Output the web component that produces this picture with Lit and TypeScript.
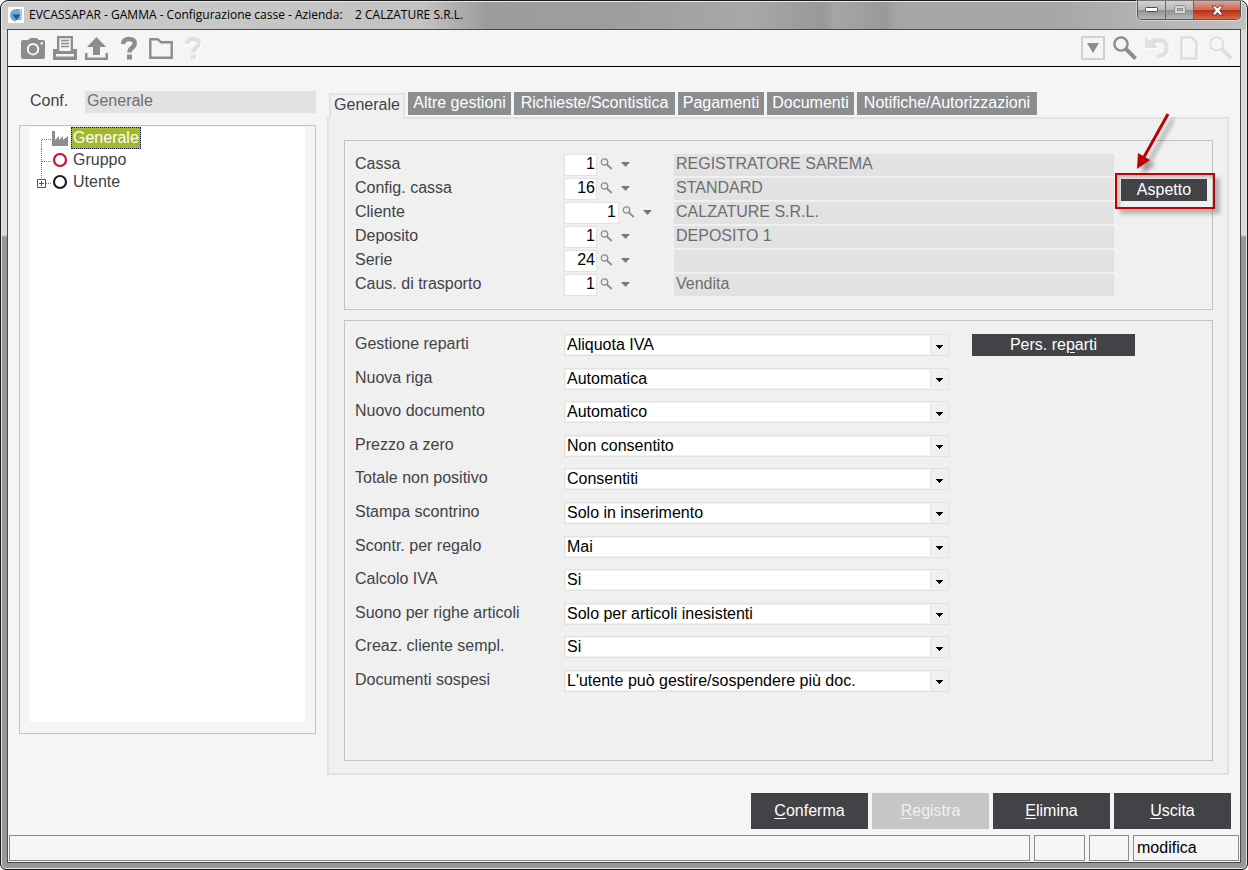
import { LitElement, html, css, svg } from "lit";
import { customElement, property, state } from "lit/decorators.js";
import { classMap } from "lit/directives/class-map.js";

type Lookup = { id: string; label: string; value: string; text: string; wide?: boolean };
type Choice = { id: string; label: string; value: string };

const TABS = ["Generale", "Altre gestioni", "Richieste/Scontistica", "Pagamenti", "Documenti", "Notifiche/Autorizzazioni"];

const LOOKUPS: Lookup[] = [
  { id: "cassa", label: "Cassa", value: "1", text: "REGISTRATORE SAREMA" },
  { id: "config", label: "Config. cassa", value: "16", text: "STANDARD" },
  { id: "cliente", label: "Cliente", value: "1", text: "CALZATURE S.R.L.", wide: true },
  { id: "deposito", label: "Deposito", value: "1", text: "DEPOSITO 1" },
  { id: "serie", label: "Serie", value: "24", text: "" },
  { id: "causale", label: "Caus. di trasporto", value: "1", text: "Vendita" },
];

const CHOICES: Choice[] = [
  { id: "reparti", label: "Gestione reparti", value: "Aliquota IVA" },
  { id: "riga", label: "Nuova riga", value: "Automatica" },
  { id: "documento", label: "Nuovo documento", value: "Automatico" },
  { id: "prezzo", label: "Prezzo a zero", value: "Non consentito" },
  { id: "totale", label: "Totale non positivo", value: "Consentiti" },
  { id: "stampa", label: "Stampa scontrino", value: "Solo in inserimento" },
  { id: "regalo", label: "Scontr. per regalo", value: "Mai" },
  { id: "iva", label: "Calcolo IVA", value: "Si" },
  { id: "suono", label: "Suono per righe articoli", value: "Solo per articoli inesistenti" },
  { id: "sempl", label: "Creaz. cliente sempl.", value: "Si" },
  { id: "sospesi", label: "Documenti sospesi", value: "L'utente può gestire/sospendere più doc." },
];

const QUESTION = svg`<path d="M6 8C6.400 4.500 8.600 3 12 3c3.600 0 5.700 1.700 5.700 4.500 0 2.300-1.300 3.400-3 4.600-1.700 1.200-2.200 2.200-2.200 4.400" fill="none" stroke="currentColor" stroke-width="4.400"/><rect x="10" y="18.500" width="5" height="5" fill="currentColor"/>`;
const LENS = svg`<circle cx="8" cy="8" r="6.600" fill="none" stroke="currentColor" stroke-width="2.400"/><path d="M13 13l9.600 9.600" stroke="currentColor" stroke-width="4" fill="none"/>`;

const ICONS = {
  camera: svg`<path fill="currentColor" fill-rule="evenodd" d="M2 4h5l2.500-2h6L18 4h4a2 2 0 0 1 2 2v15a2 2 0 0 1-2 2H2a2 2 0 0 1-2-2V6a2 2 0 0 1 2-2zM12 7a6.200 6.200 0 1 0 0 12.400A6.200 6.200 0 0 0 12 7zm7.500-.8v2.300H22V6.200z"/><circle cx="12" cy="13.200" r="4.200" fill="currentColor"/>`,
  printer: svg`<path fill="currentColor" fill-rule="evenodd" d="M4 0h16v13h4v11H0V13h4zM6.300 2.300V15h11.400V2.300zM3 18v2.500h18V18z"/><path d="M8 4.500h8M8 7.500h8M8 10.500h8" stroke="currentColor" stroke-width="1.300"/>`,
  upload: svg`<path fill="currentColor" d="M11.500 1L21 11h-6v8H8v-8H2zM0 17h2.500v4.500h18V17H23v7H0z"/>`,
  help: QUESTION,
  folder: svg`<path d="M1.300 21.700V3.300h7.500l3.200 3h10.700v15.400z" fill="none" stroke="currentColor" stroke-width="2.400"/>`,
  drop: svg`<rect x="1" y="1" width="22" height="22" fill="none" stroke="#d0d0d0" stroke-width="2"/><path fill="currentColor" d="M6 7h12l-6 10z"/>`,
  lens: LENS,
  undo: svg`<path fill="currentColor" d="M0 1l4 3.500C11-.5 24 1.500 24 11.500 24 19 19 22.500 12 22.500V18c5 0 7.500-2.500 7.500-6.500 0-5-6-6.300-9.500-3.700L13 12H0z"/>`,
  page: svg`<path d="M4.500 1.500h10l5 5v16h-15z" fill="none" stroke="currentColor" stroke-width="3"/>`,
};
type IconName = keyof typeof ICONS;

@customElement("tool-button")
class ToolButton extends LitElement {
  @property() name: IconName = "help";
  @property() label = "";
  @property({ type: Boolean }) off = false;

  static styles = css`
    :host { display: block; }
    .tool { display: block; width: 24px; height: 24px; padding: 0; border: 0; background: none; color: #8c8d8f; }
    .off { color: #e0e0e0; filter: drop-shadow(1px 1px 0 #ffffff); }
    .glyph { display: block; }
  `;

  render() {
    return html`<button class=${classMap({ tool: true, off: this.off })} aria-label=${this.label} ?disabled=${this.off}>
      <svg class="glyph" width="24" height="24" viewBox="0 0 24 24" aria-hidden="true">${ICONS[this.name]}</svg>
    </button>`;
  }
}

@customElement("app-root")
class AppRoot extends LitElement {
  @state() private tab = "Generale";
  @state() private node = "Generale";

  static styles = css`
    :host { display: block; font: 16px/20px "Liberation Sans", Arial, sans-serif; color: #424347; }
    * { box-sizing: border-box; }
    button, input, select { font: inherit; color: inherit; margin: 0; border-radius: 0; }
    .window {
      display: flex; flex-direction: column; min-height: 100vh;
      border: 1px solid #1c1c1c; border-radius: 8px 8px 6px 6px; padding: 0 6px 6px;
      background: linear-gradient(#dcdcdc00 28px, #dcdada 29px, #dcdada 234px, #989594 236px, #989896 100%),
        linear-gradient(90deg, #cccccc, #c2c2c2 34%, #9c9c9c 39%, #9e9e9e 50%, #a8a8a8 60%, #989898 66%, #a6a6a6 67%, #999999 71%, #a6a6a6 72%, #a6a6a6 84%, #c0c0c0);
      box-shadow: inset 0 0 0 1px #e6e6e6;
    }
    .titlebar { display: flex; align-items: flex-start; height: 28px; }
    .app-icon { margin: 6px 5px 0 1px; flex: none; }
    .title { flex: 1; margin: 0; padding-top: 5px; font: 12px/18px "Open Sans", "Noto Sans", sans-serif; color: #000; white-space: pre; }
    .caption { display: flex; border: 1px solid #55585c; border-top: 0; border-radius: 0 0 5px 5px; overflow: hidden; box-shadow: 0 0 0 1px #ffffff66; }
    .cap { display: grid; place-items: center; width: 28px; height: 18px; padding: 0; border: 0; border-right: 1px solid #66696e; background: linear-gradient(#d2d2d2, #b9b9b9 48%, #8d8f94 50%, #b5b7ba); }
    .cap.close { width: 46px; border-right: 0; background: linear-gradient(#e0a294, #cf6a55 48%, #b92b0f 50%, #d8674a); }
    .client { flex: 1; display: flex; flex-direction: column; border: 1px solid #4a4a4a; background: #f5f5f5; }
    .toolbar { display: flex; gap: 8px; padding: 6px 7px 6px 13px; border-bottom: 1px solid #000; }
    .push { margin-left: auto; }
    .body { flex: 1; display: grid; grid-template-columns: 297px 1fr; column-gap: 11px; padding: 24px 11px 0 11px; }
    .side { display: flex; flex-direction: column; padding-bottom: 41px; }
    .conf { display: grid; grid-template-columns: 55px 1fr; padding-left: 11px; }
    .ro { width: 100%; height: 22px; border: 0; background: #e2e2e2; color: #6d6e70; padding: 0 2px 2px; outline: none; }
    .treebox { flex: 1; display: flex; margin-top: 12px; padding: 1px 10px 11px; border: 1px solid #c3c3c3; }
    .tree { flex: 1; margin: 0; padding: 0 0 0 6px; list-style: none; background: #fff; }
    .branch { display: flex; align-items: center; height: 22px; }
    .node { height: 22px; padding: 0 2px; border: 0; background: none; text-align: left; }
    .picked { background: #a2b72d; color: #fff; outline: 1px dotted #101060; outline-offset: -1px; }
    .main { display: flex; flex-direction: column; min-width: 0; }
    .tabs { display: grid; grid-template-columns: 76px 103px 161px 86px 87px 180px; align-items: start; gap: 3px; padding: 1px 0 0 2px; height: 28px; }
    .tab { height: 23px; padding: 0 0 2px; border: 0; background: #8c8d8f; color: #fff; white-space: nowrap; }
    .current { position: relative; height: 26px; margin-top: 1px; padding-bottom: 4px; border: 2px solid #e2e2e2; border-bottom: 0; background: #f0f0f0; color: #424347; }
    .panel { flex: 1; display: flex; flex-direction: column; gap: 10px; margin-top: -2px; padding: 21px 14px 12px 15px; border: 2px solid #e2e2e2; background: #f0f0f0; }
    .group { margin: 0; border: 1px solid #c3c3c3; }
    .first { display: grid; grid-template-columns: 1fr 86px; column-gap: 7px; padding: 13px 5px 13px 10px; }
    .rows { display: grid; row-gap: 2px; }
    .lookup { display: grid; grid-template-columns: 209px 110px 1fr; }
    .label { white-space: nowrap; }
    .code { display: flex; align-items: flex-start; }
    .num { width: 33px; height: 22px; padding: 0 1px 2px 0; border: 1px solid #e2e2e2; background: #fff; color: #000; text-align: right; }
    .wide { width: 55px; padding-right: 2px; }
    .mini { display: block; padding: 0; border: 0; background: none; height: 22px; }
    .find { margin-left: 3px; }
    .down { margin-left: 8px; }
    .dark { height: 22px; padding: 0 0 1px; border: 0; background: #424347; color: #fff; }
    .spot { position: relative; align-self: start; display: grid; margin-top: 25px; }
    .mark { position: absolute; left: -6px; top: -6px; width: 100px; height: 36px; border: 2px solid #c00000; box-shadow: 5px 5px 4px #00000040, inset 3px 3px 3px #00000030; pointer-events: none; }
    .arrow { position: absolute; left: 8px; top: -69px; pointer-events: none; }
    .shade { opacity: 0.35; filter: blur(2px); }
    .second { flex: 1; display: grid; grid-template-columns: 594px 163px; align-items: start; column-gap: 23px; padding: 13px 10px 68px; }
    .choices { align-self: stretch; display: flex; flex-direction: column; justify-content: space-between; }
    .choice { display: grid; grid-template-columns: 209px 385px; }
    .pick { display: grid; grid-template-columns: 1fr 19px; height: 22px; }
    .select { grid-area: 1 / 1 / 2 / 3; width: 100%; height: 22px; padding: 0 20px 0 2px; appearance: none; border: 1px solid #e2e2e2; background: linear-gradient(90deg, #fff calc(100% - 18px), #e2e2e2 calc(100% - 18px), #e2e2e2 calc(100% - 17px), #f0f0f0 calc(100% - 17px)); color: #000; box-shadow: inset 0 0 0 1px #f0f0f0; }
    .chev { grid-area: 1 / 2; place-self: center; margin-top: 3px; pointer-events: none; }
    .foot { display: flex; justify-content: flex-end; gap: 4px; padding: 18px 9px 6px; }
    .action { width: 117px; height: 36px; padding: 0 0 1px; border: 0; background: #424347; color: #fff; }
    .action:disabled { background: #c6c6c6; color: #f0f0f0; }
    .key { text-decoration: underline; text-underline-offset: 2px; }
    .status { display: grid; grid-template-columns: 1fr 51px 40px 106px; gap: 4px; padding: 0 1px 1px; }
    .cell { height: 26px; padding: 2px 3px; border: 1px solid #8c8c8c; color: #000; }
  `;

  private tool(name: IconName, label: string, off = false, push = false) {
    return html`<tool-button class=${push ? "push" : ""} name=${name} label=${label} ?off=${off}></tool-button>`;
  }

  private lookup(f: Lookup) {
    return html`<div class="lookup">
      <label class="label" for=${f.id}>${f.label}</label>
      <div class="code">
        <input id=${f.id} class=${classMap({ num: true, wide: !!f.wide })} .value=${f.value} />
        <button class="mini find" aria-label="Cerca ${f.label}">
          <svg width="13" height="12" viewBox="0 0 13 12" fill="none" stroke="#8c8d8f"><circle cx="4.500" cy="4" r="3.200" stroke-width="1.300"/><path d="M7 6.500l4.700 4.500" stroke-width="1.800"/></svg>
        </button>
        <button class="mini down" aria-label="Elenco ${f.label}">
          <svg width="10" height="12" viewBox="0 0 10 12"><path d="M0 4h9L4.500 9z" fill="#77787a"/></svg>
        </button>
      </div>
      <input class="ro" readonly aria-label="Descrizione ${f.label}" .value=${f.text} />
    </div>`;
  }

  private choice(f: Choice) {
    return html`<div class="choice">
      <label class="label" for=${f.id}>${f.label}</label>
      <div class="pick">
        <select id=${f.id} class="select"><option selected>${f.value}</option></select>
        <svg class="chev" width="7" height="4" viewBox="0 0 7 4" shape-rendering="crispEdges" aria-hidden="true"><path d="M0 0h7v1H6v1H5v1H4v1H3V3H2V2H1V1H0z" fill="#000"/></svg>
      </div>
    </div>`;
  }

  private treeNode(name: string, art: unknown) {
    return html`<li class="branch">
      <svg width="35" height="22" viewBox="0 0 35 22" aria-hidden="true">${art}</svg>
      <button class=${classMap({ node: true, picked: this.node === name })} @click=${() => (this.node = name)}>${name}</button>
    </li>`;
  }

  private action(key: string, rest: string, off = false) {
    return html`<button class="action" ?disabled=${off}><span class="key">${key}</span>${rest}</button>`;
  }

  render() {
    return html`<div class="window">
      <header class="titlebar">
        <svg class="app-icon" width="16" height="16" viewBox="0 0 16 16" aria-hidden="true">
          <rect width="16" height="16" fill="#fff"/><path d="M8 2a6 6 0 0 0-6 6c0 3.500 2.500 6 5.500 6.500L9 13h4V3.500L11 2z" fill="#6aa9d4"/><path d="M4.500 7.500h8L8.500 13z" fill="#1d5a8e"/><path d="M11 2.500l3-.5v11h-2V8z" fill="#a7c9e2"/>
        </svg>
        <h1 class="title">EVCASSAPAR - GAMMA - Configurazione casse - Azienda:    2 CALZATURE S.R.L.</h1>
        <div class="caption">
          <button class="cap" aria-label="Riduci a icona"><svg width="13" height="6"><rect x=".5" y=".5" width="12" height="4" rx="1" fill="#fff" stroke="#4a4d55"/></svg></button>
          <button class="cap" aria-label="Ingrandisci" disabled><svg width="12" height="10"><rect x=".5" y=".5" width="11" height="8" rx="1" fill="#d5d5d5" stroke="#8b8d91"/><rect x="3.500" y="3.500" width="5" height="2" fill="#b5b5b5" stroke="#8b8d91"/></svg></button>
          <button class="cap close" aria-label="Chiudi"><svg width="13" height="11" viewBox="0 0 13 11"><path d="M1 1h3.500l2 2.200L8.500 1H12L8.700 5.300 12 10H8.500l-2-2.500-2 2.500H1l3.300-4.700z" fill="#fff" stroke="#4d3b45" stroke-width=".9"/></svg></button>
        </div>
      </header>
      <div class="client">
        <nav class="toolbar" aria-label="Strumenti">
          ${this.tool("camera", "Cattura")}${this.tool("printer", "Stampa")}${this.tool("upload", "Esporta")}
          ${this.tool("help", "Aiuto")}${this.tool("folder", "Apri")}${this.tool("help", "Guida", true)}
          ${this.tool("drop", "Menu", false, true)}${this.tool("lens", "Cerca")}${this.tool("undo", "Annulla", true)}
          ${this.tool("page", "Nuovo", true)}${this.tool("lens", "Zoom", true)}
        </nav>
        <div class="body">
          <aside class="side">
            <div class="conf"><label for="conf">Conf.</label><input id="conf" class="ro" readonly .value=${"Generale"} /></div>
            <div class="treebox">
              <ul class="tree">
                ${this.treeNode("Generale", svg`<path d="M5.500 22V12.500H16" fill="none" stroke="#777" stroke-dasharray="1 1"/><path d="M16 4h3v9l4-4v4l4-4v4l5-4v10H16z" fill="#8c8d8f"/>`)}
                ${this.treeNode("Gruppo", svg`<path d="M5.500 0v22M6 12.500h9" fill="none" stroke="#777" stroke-dasharray="1 1"/><circle cx="24" cy="11" r="6" fill="none" stroke="#c8102e" stroke-width="2.200"/>`)}
                ${this.treeNode("Utente", svg`<path d="M5.500 0v8M10 12.500h6" fill="none" stroke="#777" stroke-dasharray="1 1"/><path d="M1.500 8.500h8v8h-8zM3 12.500h5M5.500 10v5" fill="none" stroke="#555"/><circle cx="24" cy="11" r="6" fill="none" stroke="#1c2228" stroke-width="2.200"/>`)}
              </ul>
            </div>
          </aside>
          <main class="main">
            <div class="tabs" role="tablist">
              ${TABS.map((t) => html`<button role="tab" aria-selected=${t === this.tab ? "true" : "false"} class=${classMap({ tab: true, current: t === this.tab })} @click=${() => (this.tab = t)}>${t}</button>`)}
            </div>
            <section class="panel">
              <div class="group first">
                <div class="rows">${LOOKUPS.map((f) => this.lookup(f))}</div>
                <div class="spot">
                  <button class="dark">Aspetto</button>
                  <div class="mark"></div>
                  <svg class="arrow" width="60" height="70" viewBox="0 0 60 70" aria-hidden="true">
                    <g class="shade" transform="translate(5 5)"><path d="M39 4L15 47" stroke="#000" stroke-width="3"/><path d="M8 59l1-16 12 7z" fill="#000"/></g>
                    <path d="M39 4L15 47" stroke="#c00000" stroke-width="3"/><path d="M8 59l1-16 12 7z" fill="#c00000"/>
                  </svg>
                </div>
              </div>
              <div class="group second">
                <div class="choices">${CHOICES.map((f) => this.choice(f))}</div>
                <button class="dark">Pers. re<span class="key">p</span>arti</button>
              </div>
            </section>
          </main>
        </div>
        <div class="foot">
          ${this.action("C", "onferma")}${this.action("R", "egistra", true)}${this.action("E", "limina")}${this.action("U", "scita")}
        </div>
        <footer class="status">
          <div class="cell"></div><div class="cell"></div><div class="cell"></div><div class="cell">modifica</div>
        </footer>
      </div>
    </div>`;
  }
}
